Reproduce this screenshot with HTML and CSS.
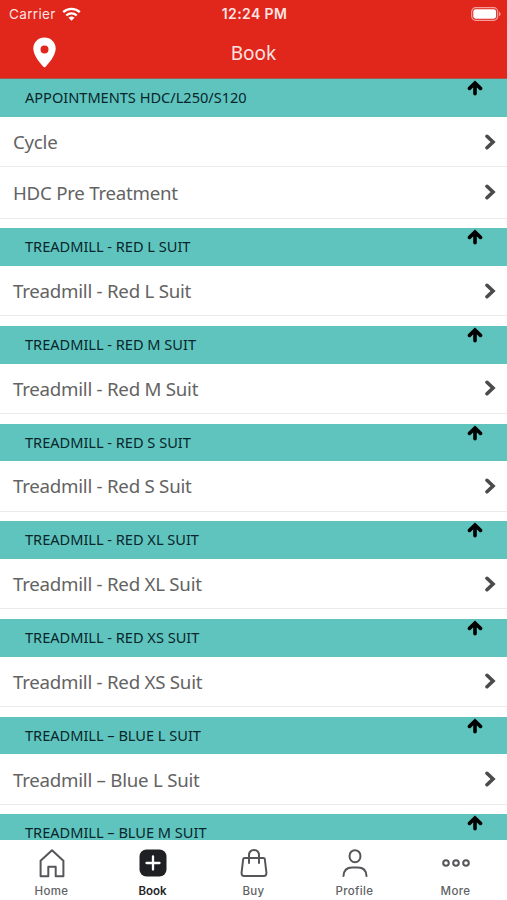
FILE: index.html
```html
<!DOCTYPE html>
<html lang="en">
<head>
<meta charset="utf-8">
<title>Book</title>
<link rel="stylesheet" href="styles.css">
</head>
<body>
<svg class="defs" width="0" height="0">
  <symbol id="up" viewBox="0 0 16 16"><path d="M8 13.800V3M2.500 8.400 8 3l5.500 5.400" fill="none" stroke="#000" stroke-width="3.600" stroke-linecap="round" stroke-linejoin="miter"/></symbol>
  <symbol id="next" viewBox="0 0 12 16"><path d="M3 2.300 9 8 3 13.700" fill="none" stroke="#4b4b4b" stroke-width="3.600" stroke-linecap="round"/></symbol>
</svg>
<div class="app">
  <header class="top">
    <div class="status">
      <div class="carrier"><span>Carrier</span>
        <svg width="19" height="14" viewBox="0 0 19 14"><g fill="none" stroke="#fff" stroke-width="2.4"><path d="M1.2 5.2a12 12 0 0 1 16.6 0"/><path d="M4.3 8.5a7.5 7.5 0 0 1 10.4 0"/></g><path d="M6.5 10.8a4.4 4.4 0 0 1 6 0L9.5 13.8z" fill="#fff"/></svg>
      </div>
      <div class="clock">12:24 PM</div>
      <svg class="battery" width="30" height="14" viewBox="0 0 30 14"><rect x=".7" y=".7" width="26" height="12.6" rx="4" fill="none" stroke="#f3a09c" stroke-width="1.2"/><rect x="2.3" y="2.3" width="22.8" height="9.4" rx="2.4" fill="#fff"/><path d="M28 4.8c2 .7 2 3.7 0 4.4z" fill="#f3a09c"/></svg>
    </div>
    <div class="nav">
      <svg class="pin" width="23" height="31" viewBox="0 0 23 31"><path fill="#fff" fill-rule="evenodd" d="M11.5.5C5.200.5.3 5.400.3 11.500c0 7.500 8.200 16.200 10.200 18.200q1 1 2 0c2-2 10.200-10.700 10.200-18.200C22.700 5.400 17.800.5 11.500.5zm0 8a4 4 0 1 1 0 8 4 4 0 0 1 0-8z"/></svg>
      <h1>Book</h1>
    </div>
  </header>
  <main class="list">
    <section><h2>APPOINTMENTS HDC/L250/S120<svg class="up"><use href="#up"/></svg></h2>
      <div class="row">Cycle<svg class="next"><use href="#next"/></svg></div>
      <div class="row">HDC Pre Treatment<svg class="next"><use href="#next"/></svg></div></section>
    <section><h2>TREADMILL - RED L SUIT<svg class="up"><use href="#up"/></svg></h2>
      <div class="row">Treadmill - Red L Suit<svg class="next"><use href="#next"/></svg></div></section>
    <section><h2>TREADMILL - RED M SUIT<svg class="up"><use href="#up"/></svg></h2>
      <div class="row">Treadmill - Red M Suit<svg class="next"><use href="#next"/></svg></div></section>
    <section><h2>TREADMILL - RED S SUIT<svg class="up"><use href="#up"/></svg></h2>
      <div class="row">Treadmill - Red S Suit<svg class="next"><use href="#next"/></svg></div></section>
    <section><h2>TREADMILL - RED XL SUIT<svg class="up"><use href="#up"/></svg></h2>
      <div class="row">Treadmill - Red XL Suit<svg class="next"><use href="#next"/></svg></div></section>
    <section><h2>TREADMILL - RED XS SUIT<svg class="up"><use href="#up"/></svg></h2>
      <div class="row">Treadmill - Red XS Suit<svg class="next"><use href="#next"/></svg></div></section>
    <section><h2>TREADMILL – BLUE L SUIT<svg class="up"><use href="#up"/></svg></h2>
      <div class="row">Treadmill – Blue L Suit<svg class="next"><use href="#next"/></svg></div></section>
    <section><h2>TREADMILL – BLUE M SUIT<svg class="up"><use href="#up"/></svg></h2></section>
  </main>
  <nav class="tabs">
    <div class="tab"><svg width="30" height="30" viewBox="0 0 30 30"><path d="M3.600 12.800 15 2.200l11.400 10.600v15.400h-7.700v-9.400h-7.400v9.400H3.600z"/></svg><span>Home</span></div>
    <div class="tab active"><svg width="30" height="30" viewBox="0 0 30 30"><rect x="1.500" y="1.500" width="27" height="27" rx="7" fill="#1f2023" stroke="none"/><path d="M15 8.500v13M8.500 15h13" stroke="#fff" stroke-width="2.300"/></svg><span>Book</span></div>
    <div class="tab"><svg width="30" height="30" viewBox="0 0 30 30"><path d="M5.400 10h19.200q1 0 1.200 1l1.600 13.500q.2 3.500-2.500 3.500H5.100q-2.700 0-2.500-3.500L4.200 11q.2-1 1.200-1zM10 15V7.500q0-5.500 5-5.500t5 5.500V15"/></svg><span>Buy</span></div>
    <div class="tab"><svg width="30" height="30" viewBox="0 0 30 30"><rect x="9.600" y="2.200" width="10.800" height="12" rx="5.400"/><path d="M3.500 28c.3-5.500 3.500-8.500 8.500-8.500h6c5 0 8.200 3 8.500 8.500"/></svg><span>Profile</span></div>
    <div class="tab"><svg width="30" height="30" viewBox="0 0 30 30"><circle cx="5" cy="15" r="2.800"/><circle cx="15" cy="15" r="2.800"/><circle cx="25" cy="15" r="2.800"/></svg><span>More</span></div>
  </nav>
</div>
</body>
</html>
```
FILE: styles.css
```css
* { box-sizing: border-box; }
body { margin: 0; background: #fff; font-family: "Noto Sans", sans-serif; }
.defs { position: absolute; }
.app { height: 900px; display: flex; flex-direction: column; overflow: hidden; }
.top { height: 79.300px; flex: none; background: #e1261c; color: #fff; border-bottom: 1px solid #a85a50; }
.status { height: 27px; display: grid; grid-template-columns: 1fr auto 1fr; align-items: center; padding: 0 6px 0 9px; font-family: Inter, sans-serif; font-size: 13.500px; color: #fde4e1; }
.carrier { display: flex; align-items: center; gap: 6px; letter-spacing: .35px; }
.clock { font-weight: 600; font-size: 14px; letter-spacing: .4px; margin-left: -1px; }
.battery { justify-self: end; }
.nav { height: 51px; display: grid; grid-template-columns: 1fr auto 1fr; align-items: center; padding: 0 33px; }
.pin { margin-top: -1px; }
h1 { margin: 0; font-size: 19px; font-weight: 400; line-height: 26px; color: #fde4e1; }
.list { flex: 1; min-height: 0; overflow: hidden; }
section { margin-bottom: 9.800px; }
h2 { margin: 0; height: 37.700px; padding: 0 24px 0 25px; background: #60c4be; color: #08262b; font-size: 14.600px; font-weight: 400; line-height: 37px; letter-spacing: -.02px; display: flex; justify-content: space-between; }
.up { width: 16px; height: 16px; margin-top: 1px; }
.row { height: 51.400px; border-bottom: 1.500px solid #eaeaea; padding: 0 11px 0 13px; display: flex; align-items: center; justify-content: space-between; font-size: 18.700px; letter-spacing: -.25px; color: #636363; }
h2 + .row { height: 50.200px; }
.next { width: 12px; height: 16px; }
.tabs { height: 60px; flex: none; display: flex; padding: 0 1px; background: #fff; }
.tab { flex: 1; display: flex; flex-direction: column; align-items: center; padding-top: 8px; font-family: Inter, sans-serif; font-size: 11.500px; font-weight: 500; line-height: 16px; letter-spacing: .35px; color: #616265; }
.tab svg { fill: none; stroke: #55565a; stroke-width: 2; stroke-linejoin: round; stroke-linecap: round; }
.tab span { margin-top: 5px; }
.tab.active { color: #242528; font-weight: 600; letter-spacing: 0; }
```
